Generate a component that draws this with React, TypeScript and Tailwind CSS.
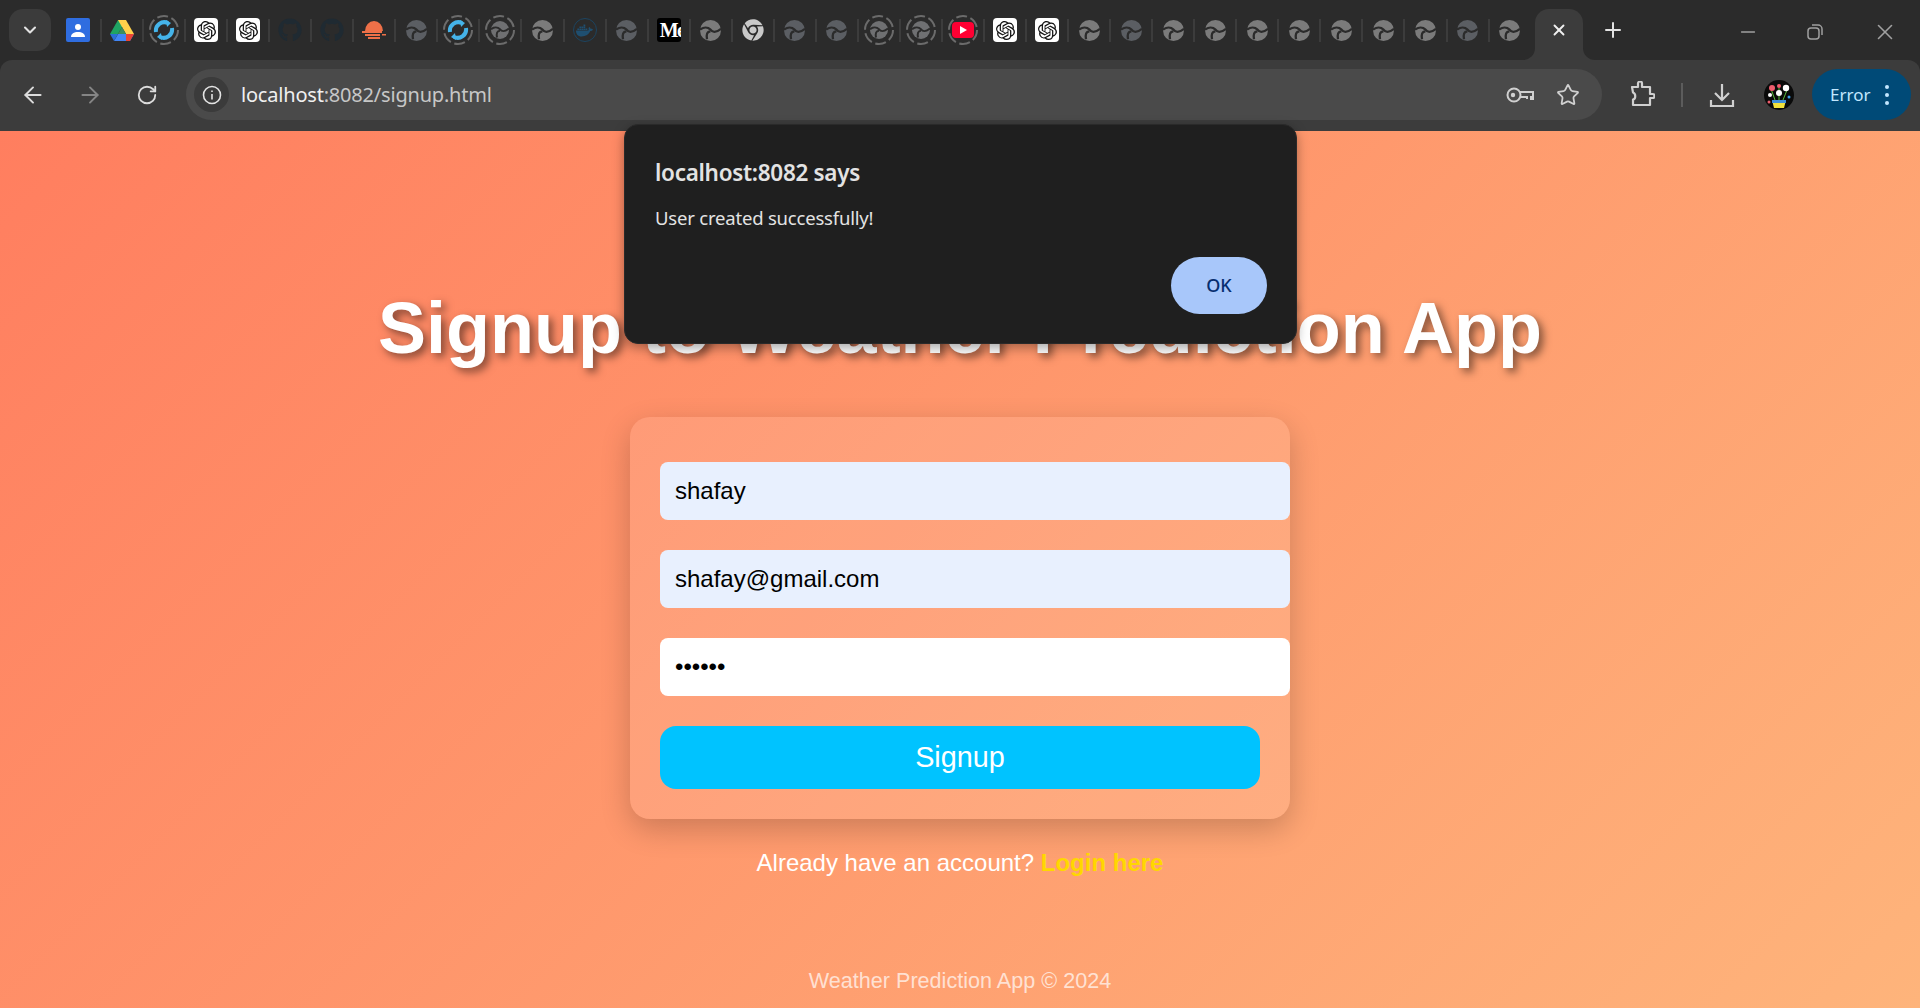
import React from "react";
import { ArrowLeft, ArrowRight, ChevronDown, Minus, Plus, RotateCw, Star, X } from "lucide-react";
import { FaChrome, FaDocker, FaGithub } from "react-icons/fa";
import { SiOpenai } from "react-icons/si";

type TabIcon =
  | "contacts"
  | "drive"
  | "spin"
  | "openai"
  | "github"
  | "sun"
  | "globe"
  | "dim"
  | "ring"
  | "docker"
  | "medium"
  | "chrome"
  | "youtube";

const tabs: TabIcon[] = [
  "contacts", "drive", "spin", "openai", "openai", "github", "github", "sun", "dim",
  "spin", "ring", "globe", "docker", "dim", "medium", "globe", "chrome", "dim", "dim",
  "ring", "ring", "youtube", "openai", "openai", "globe", "dim", "globe", "globe",
  "globe", "globe", "globe", "globe", "globe", "dim", "globe",
];

function Globe({ size = 21, color = "#7b7b7b" }: { size?: number; color?: string }) {
  return (
    <svg width={size} height={size} viewBox="0 0 24 24">
      <circle cx="12" cy="12" r="12" fill={color} />
      <path d="M0 11C4 8 9 8 12 11 14 14 18 15 24 10" fill="none" stroke="#2b2b2b" strokeWidth="2.600" />
      <path d="M12 13C8 13 7 17 8 22" fill="none" stroke="#2b2b2b" strokeWidth="2.600" />
    </svg>
  );
}

function DashedRing({ children }: { children: React.ReactNode }) {
  return (
    <div className="relative flex h-[30px] w-[30px] items-center justify-center">
      <svg className="absolute inset-0" width="30" height="30" viewBox="0 0 30 30">
        <circle cx="15" cy="15" r="14" fill="none" stroke="#6b6b6b" strokeWidth="2" strokeDasharray="11 3.660" />
      </svg>
      {children}
    </div>
  );
}

function Favicon({ icon }: { icon: TabIcon }) {
  switch (icon) {
    case "contacts":
      return (
        <div className="mr-[4px] flex h-[24px] w-[24px] flex-col items-center justify-center rounded-[2px] bg-[#2f6de0]">
          <svg width="18" height="18" viewBox="0 0 18 18">
            <circle cx="9" cy="6" r="3" fill="#fff" />
            <path d="M2 16c0-3.500 3-5 7-5s7 1.500 7 5z" fill="#fff" />
          </svg>
        </div>
      );
    case "drive":
      return (
        <svg width="24" height="22" viewBox="0 0 24 22">
          <path d="M8 1h8L8 15H0z" fill="#1fa463" />
          <path d="M8 1h8l8 14h-8z" fill="#ffd04b" />
          <path d="M4 22 8 15h16l-4 7z" fill="#4285f4" />
          <path d="M0 15h8l-4 7z" fill="#2b6fd6" />
          <path d="M8 15h8l-4-7z" fill="#3c8f5c" />
          <path d="M16 15h8l-4 7h-4z" fill="#ea4335" />
        </svg>
      );
    case "spin":
      return (
        <DashedRing>
          <svg width="22" height="22" viewBox="0 0 22 22" fill="none" stroke="#45b4ea" strokeWidth="4">
            <path d="M3 13a8.500 8.500 0 0 1 12-9" />
            <path d="M19 9a8.500 8.500 0 0 1-12 9" />
            <path d="M13 1l5 3-4 4z" fill="#45b4ea" strokeWidth="0" />
            <path d="M9 21l-5-3 4-4z" fill="#45b4ea" strokeWidth="0" />
          </svg>
        </DashedRing>
      );
    case "openai":
      return (
        <div className="flex h-[24px] w-[24px] items-center justify-center rounded-[4px] bg-white">
          <SiOpenai size={19} color="#111" />
        </div>
      );
    case "github":
      return <FaGithub size={24} color="#1f2a32" />;
    case "sun":
      return (
        <svg width="24" height="20" viewBox="0 0 24 20" fill="#ee7048">
          <path d="M3 11a9 10 0 0 1 18 0z" />
          <rect x="0" y="11" width="20" height="2" />
          <rect x="3" y="14" width="15" height="2" />
          <rect x="6" y="17" width="12" height="2" />
          <rect x="20" y="14" width="4" height="1.500" />
        </svg>
      );
    case "globe":
      return <Globe />;
    case "dim":
      return <Globe color="#5b5e63" />;
    case "ring":
      return (
        <DashedRing>
          <Globe size={18} color="#6f7072" />
        </DashedRing>
      );
    case "docker":
      return (
        <div className="flex h-[24px] w-[24px] items-center justify-center rounded-full border border-[#1c4460]">
          <FaDocker size={17} color="#1f4f70" />
        </div>
      );
    case "medium":
      return (
        <div className="flex h-[24px] w-[24px] items-center overflow-hidden rounded-[3px] bg-black pl-[3px] font-['Liberation_Serif',serif] text-[20px] font-bold tracking-[-1.500px] text-white">
          Me
        </div>
      );
    case "chrome":
      return <FaChrome size={22} color="#c9c9c9" />;
    case "youtube":
      return (
        <DashedRing>
          <div className="flex h-[16px] w-[22px] items-center justify-center rounded-[4px] bg-[#ff0033]">
            <div className="ml-[1px] h-0 w-0 border-y-[4px] border-l-[7px] border-y-transparent border-l-white" />
          </div>
        </DashedRing>
      );
  }
}

function TabStrip() {
  return (
    <div className="flex h-[60px] shrink-0 items-start bg-[#2b2b2b]">
      <button className="ml-[9px] mt-[9px] flex h-[42px] w-[42px] items-center justify-center rounded-[14px] bg-[#3b3b3b] text-[#e3e3e3]">
        <ChevronDown size={20} strokeWidth={2.500} />
      </button>
      <div className="ml-[9px] flex h-full items-center">
        {tabs.map((icon, i) => (
          <div key={i} className="flex w-[42.06px] items-center">
            <div className="flex w-[40px] items-center justify-center">
              <Favicon icon={icon} />
            </div>
            {i < tabs.length - 1 && <span className="h-[23px] w-[2px] bg-[#3c3c3c]" />}
          </div>
        ))}
      </div>
      {/* Active tab with the flared bottom corners */}
      <div className="relative ml-[3px] mt-[9px] flex h-[51px] w-[48px] justify-center rounded-t-[14px] bg-[#3c3c3c] pt-[12px] text-[#f0f0f0]">
        <X size={18} strokeWidth={2.500} />
        <span className="absolute bottom-0 left-[-12px] h-[12px] w-[12px] bg-[#3c3c3c]">
          <span className="block h-full w-full rounded-br-[12px] bg-[#2b2b2b]" />
        </span>
        <span className="absolute bottom-0 right-[-12px] h-[12px] w-[12px] bg-[#3c3c3c]">
          <span className="block h-full w-full rounded-bl-[12px] bg-[#2b2b2b]" />
        </span>
      </div>
      <div className="ml-[18px] mt-[18px] text-[#e3e3e3]">
        <Plus size={24} strokeWidth={2} />
      </div>
      <div className="ml-auto mt-[19px] flex items-center text-[#a0a0a0]">
        <Minus size={22} strokeWidth={1.500} />
        <svg className="ml-[47px]" width="18" height="18" viewBox="0 0 18 18" fill="none" stroke="currentColor" strokeWidth="1.500">
          <rect x="2" y="5" width="11" height="11" rx="3" />
          <path d="M6 2h6a4 4 0 0 1 4 4v6" />
        </svg>
        <X className="ml-[48px] mr-[22px]" size={26} strokeWidth={1.500} />
      </div>
    </div>
  );
}

function Avatar() {
  return (
    <svg width="30" height="30" viewBox="0 0 30 30">
      <circle cx="15" cy="15" r="15" fill="#0a0a0a" />
      <path d="M8 20h14l-2 8H10z" fill="#f2e13c" />
      <path d="M8 20h14v3H8z" fill="#3f8fd8" />
      <path d="M15 20V8M11 20 7 9M19 20l4-10" stroke="#5ac13c" strokeWidth="1" />
      <circle cx="8" cy="8" r="3" fill="#ee5c6c" />
      <circle cx="22" cy="8" r="3.200" fill="#fff" />
      <circle cx="15" cy="13" r="3" fill="#fff" />
      <circle cx="15" cy="6" r="2" fill="#ee5c6c" />
      <circle cx="6" cy="15" r="2" fill="#fff" />
      <circle cx="25" cy="17" r="1.500" fill="#3fa0e8" />
      <circle cx="5" cy="22" r="1.500" fill="#ee5c6c" />
    </svg>
  );
}

function Toolbar() {
  return (
    <div className="flex h-[71px] shrink-0 items-center rounded-t-[12px] bg-[#3c3c3c] pb-[2px]">
      <ArrowLeft className="ml-[20px] text-[#dcdcdc]" size={26} strokeWidth={1.800} />
      <ArrowRight className="ml-[31px] text-[#858585]" size={26} strokeWidth={1.800} />
      <RotateCw className="ml-[33px] text-[#dcdcdc]" size={22} strokeWidth={2} />
      <div className="ml-[28px] flex h-[51px] w-[1416px] items-center rounded-full bg-[#4a4a4a] pl-[8px] pr-[22px]">
        <div className="flex h-[35px] w-[35px] items-center justify-center rounded-full bg-[#3b3b3b]">
          <svg width="20" height="20" viewBox="0 0 20 20" fill="none" stroke="#e3e3e3" strokeWidth="1.600">
            <circle cx="10" cy="10" r="8.500" />
            <path d="M10 9v5.500M10 5.500v1.600" />
          </svg>
        </div>
        <div className="ml-[12px] text-[20px] tracking-[-0.2px] text-[#c7c7c7]">
          <span className="text-[#f0f0f0]">localhost</span>:8082/signup.html
        </div>
        <svg className="ml-auto" width="28" height="18" viewBox="0 0 28 18" fill="none" stroke="#d0d0d0" strokeWidth="2">
          <circle cx="8" cy="9" r="6.500" />
          <circle cx="7" cy="9" r="2.200" fill="#d0d0d0" stroke="none" />
          <path d="M14 6h13v7h-2v-3M21 10v3M14 11h6" />
        </svg>
        <Star className="ml-[22px]" size={24} strokeWidth={1.800} color="#d0d0d0" />
      </div>
      {/* Puzzle piece of the extensions button */}
      <svg className="ml-[28px]" width="25" height="27" viewBox="0 0 25 27" fill="none" stroke="#d0d0d0" strokeWidth="2.200" strokeLinejoin="round">
        <path d="M2 6h6V2.500a2 2 0 0 1 4 0V6h8v7h2.500a1.500 1.500 0 0 1 0 4H20v7H3v-5.500c3-.5 3-6 0-7z" />
      </svg>
      <span className="ml-[26px] h-[24px] w-[2px] bg-[#5c5c5c]" />
      <svg className="ml-[26px]" width="26" height="26" viewBox="0 0 26 26" fill="none" stroke="#d0d0d0" strokeWidth="2.200">
        <path d="M13 2v15M6 11l7 7 7-7M2 18v6h22v-6" />
      </svg>
      <div className="ml-[29px]">
        <Avatar />
      </div>
      <div className="ml-[18px] flex h-[51px] w-[99px] items-center rounded-full bg-[#004a77] pl-[18px] text-[17px] text-[#c2e7ff]">
        Error
        <div className="ml-[15px] flex flex-col gap-[4px]">
          <span className="h-[4px] w-[4px] rounded-full bg-[#c2e7ff]" />
          <span className="h-[4px] w-[4px] rounded-full bg-[#c2e7ff]" />
          <span className="h-[4px] w-[4px] rounded-full bg-[#c2e7ff]" />
        </div>
      </div>
    </div>
  );
}

function AlertDialog() {
  return (
    <div className="absolute left-[624px] top-[124px] z-10 flex h-[220px] w-[673px] flex-col rounded-[14px] border border-[#2a2a2a] bg-[#1f1f1f] pl-[30px] pr-[29px] pt-[32px] shadow-[0_4px_12px_rgba(0,0,0,0.35)]">
      <div className="text-[22.500px] font-semibold leading-[32px] tracking-[-0.3px] text-[#e3e3e3]">localhost:8082 says</div>
      <div className="mt-[16px] text-[18.500px] leading-[26px] tracking-[-0.2px] text-[#e3e3e3]">User created successfully!</div>
      <button className="ml-auto mt-[26px] flex h-[57px] w-[96px] items-center justify-center rounded-full bg-[#a8c7fa] text-[18px] font-medium text-[#062e6f]">
        OK
      </button>
    </div>
  );
}

const fieldClass =
  "h-[58px] w-[630px] rounded-[8px] px-[15px] text-[24px] text-black outline-none";

function SignupPage() {
  return (
    <main className="flex min-h-0 flex-1 flex-col items-center bg-[linear-gradient(135deg,#ff7e5f,#feb47b)] font-['Liberation_Sans',Arial,sans-serif]">
      <h1 className="mt-[157px] text-[72px] font-bold leading-[80px] text-white [text-shadow:4px_4px_8px_rgba(0,0,0,0.5)]">
        Signup to Weather Prediction App
      </h1>
      <form className="mt-[49px] flex h-[402px] w-[660px] flex-col items-start gap-[30px] rounded-[20px] bg-white/10 px-[30px] pt-[45px] shadow-[0_10px_30px_rgba(0,0,0,0.2)]">
        <input className={`${fieldClass} bg-[#e8f0fe]`} type="text" value="shafay" readOnly />
        <input className={`${fieldClass} bg-[#e8f0fe]`} type="email" value="shafay@gmail.com" readOnly />
        <input className={`${fieldClass} bg-white`} type="password" value="123456" readOnly />
        <button type="button" className="h-[63px] w-[600px] rounded-[16px] bg-[#00c3ff] text-[28.800px] text-white">
          Signup
        </button>
      </form>
      <p className="mt-[30px] text-[24px] leading-[28px] text-white">
        Already have an account? <a className="font-bold text-[#ffd700]">Login here</a>
      </p>
      <footer className="mt-[91px] text-[21.600px] leading-[26px] text-white/70">Weather Prediction App © 2024</footer>
    </main>
  );
}

export default function App() {
  return (
    <div className="relative flex h-[1008px] w-full flex-col overflow-hidden bg-[#2b2b2b] font-['Noto_Sans',sans-serif]">
      <TabStrip />
      <Toolbar />
      <SignupPage />
      <AlertDialog />
    </div>
  );
}
